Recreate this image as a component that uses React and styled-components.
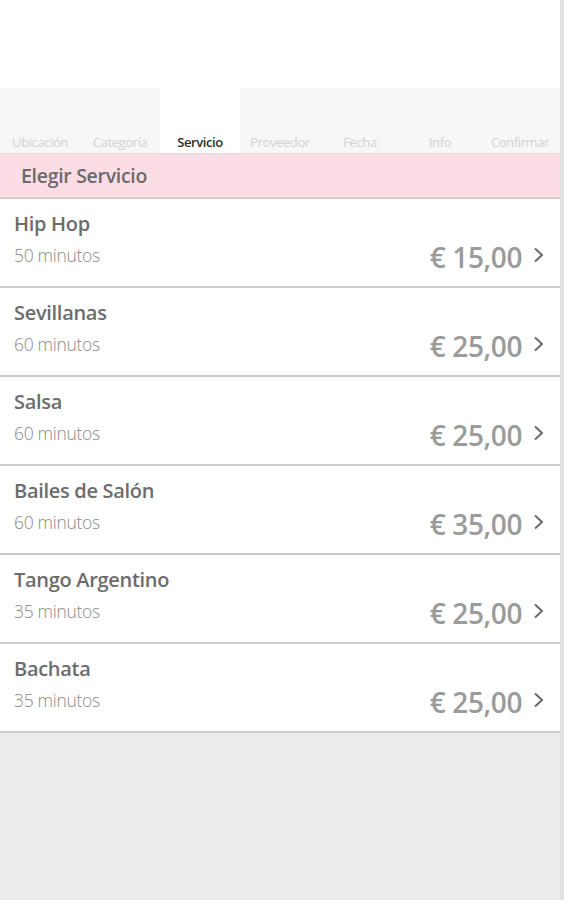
import React from "react";
import styled, { createGlobalStyle } from "styled-components";

const Global = createGlobalStyle`
  html, body { margin: 0; padding: 0; background: #ececec; }
  body { font-family: "Open Sans", "Noto Sans", sans-serif; }
`;

const Page = styled.div`
  width: 560px;
  min-height: 900px;
  background: #ececec;
  border-right: 4px solid #e2e2e2;
  display: flex;
  flex-direction: column;
`;

const TopSpace = styled.div`
  height: 88px;
  background: #ffffff;
`;

const Tabs = styled.nav`
  display: grid;
  grid-template-columns: repeat(7, 80px);
  height: 65px;
  background: #f7f7f7;
  border-bottom: 1px solid #dcdcdc;
`;

const Tab = styled.div`
  display: flex;
  align-items: flex-end;
  justify-content: center;
  padding-bottom: 2px;
  font-size: 13px;
  letter-spacing: -0.4px;
  white-space: nowrap;
  color: ${(p) => (p.$active ? "#2b2b2b" : "#d2d2d2")};
  background: ${(p) => (p.$active ? "#ffffff" : "transparent")};
  font-weight: ${(p) => (p.$active ? 600 : 400)};
`;

const Header = styled.div`
  height: 43px;
  background: #fddde5;
  border-bottom: 2px solid #cfcfcf;
  display: flex;
  align-items: center;
  padding-left: 21px;
  font-size: 19.5px;
  font-weight: 600;
  color: #6a6a6a;
  letter-spacing: -0.3px;
`;

const List = styled.div`
  display: flex;
  flex-direction: column;
`;

const Row = styled.div`
  height: 89px;
  box-sizing: border-box;
  background: #ffffff;
  border-bottom: 2px solid #cbcbcb;
  display: flex;
  flex-direction: column;
  padding: 12px 16px 0 14px;
`;

const Title = styled.div`
  font-size: 20px;
  font-weight: 600;
  color: #6c6c6c;
  letter-spacing: -0.3px;
  line-height: 26px;
`;

const Bottom = styled.div`
  display: flex;
  align-items: center;
  height: 38px;
`;

const Duration = styled.div`
  flex: 1;
  font-size: 17.5px;
  font-weight: 300;
  color: #8a8a8a;
  letter-spacing: -0.3px;
  margin-top: -2px;
`;

const Price = styled.div`
  font-size: 28px;
  font-weight: 600;
  color: #9b9b9b;
  letter-spacing: -0.4px;
  line-height: 38px;
  margin-top: 2px;
`;

const Chevron = styled.svg`
  margin-left: 11px;
  margin-top: -2px;
`;

const services = [
  { name: "Hip Hop", time: "50 minutos", price: "€ 15,00" },
  { name: "Sevillanas", time: "60 minutos", price: "€ 25,00" },
  { name: "Salsa", time: "60 minutos", price: "€ 25,00" },
  { name: "Bailes de Salón", time: "60 minutos", price: "€ 35,00" },
  { name: "Tango Argentino", time: "35 minutos", price: "€ 25,00" },
  { name: "Bachata", time: "35 minutos", price: "€ 25,00" },
];

const tabs = ["Ubicación", "Categoría", "Servicio", "Proveedor", "Fecha", "Info", "Confirmar"];

export default function App() {
  return (
    <>
      <Global />
      <Page>
        <TopSpace />
        <Tabs>
          {tabs.map((t) => (
            <Tab key={t} $active={t === "Servicio"}>{t}</Tab>
          ))}
        </Tabs>
        <Header>Elegir Servicio</Header>
        <List>
          {services.map((s) => (
            <Row key={s.name}>
              <Title>{s.name}</Title>
              <Bottom>
                <Duration>{s.time}</Duration>
                <Price>{s.price}</Price>
                <Chevron width="11" height="16" viewBox="0 0 11 16">
                  <path d="M2 1.5 L9 8 L2 14.5" fill="none" stroke="#666" strokeWidth="1.9" />
                </Chevron>
              </Bottom>
            </Row>
          ))}
        </List>
      </Page>
    </>
  );
}
